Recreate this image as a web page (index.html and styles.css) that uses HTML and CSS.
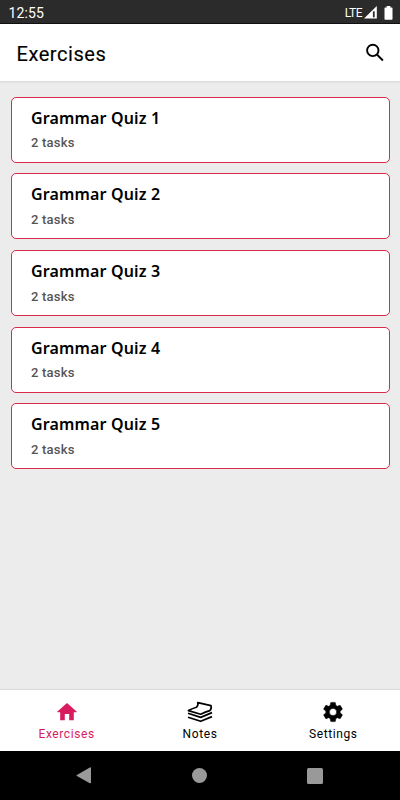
FILE: index.html
```html
<!DOCTYPE html>
<html lang="en">
<head>
<meta charset="utf-8">
<title>Exercises</title>
<link rel="stylesheet" href="styles.css">
</head>
<body>
<div class="status">
  <span class="clock">12:55</span>
  <span class="lte">LTE</span>
  <svg class="signal" width="13" height="13" viewBox="0 0 13 13"><path d="M0 12.6 12.8 0v12.6z" fill="#fff"/><path d="M9.8 5.3v6" stroke="#2b2b2b" stroke-width="1.8"/></svg>
  <svg class="battery" width="9" height="14" viewBox="0 0 9 14"><path d="M2.6 0h3.8v1.6h1.4q.7 0 .7.7v10.6q0 .8-.7.8H1.2q-.7 0-.7-.8V2.3q0-.7.7-.7h1.4z" fill="#fff"/></svg>
</div>
<header class="header">
  <h1>Exercises</h1>
  <svg width="18" height="19" viewBox="0 0 18 19" fill="none" stroke="#000" stroke-width="1.9"><circle cx="6.8" cy="7.4" r="5.7"/><path d="m10.9 11.5 6 6"/></svg>
</header>
<main class="list">
  <article class="card"><h2>Grammar Quiz 1</h2><p>2 tasks</p></article>
  <article class="card"><h2>Grammar Quiz 2</h2><p>2 tasks</p></article>
  <article class="card"><h2>Grammar Quiz 3</h2><p>2 tasks</p></article>
  <article class="card"><h2>Grammar Quiz 4</h2><p>2 tasks</p></article>
  <article class="card"><h2>Grammar Quiz 5</h2><p>2 tasks</p></article>
</main>
<nav class="tabs">
  <a class="tab active"><svg width="24" height="24" viewBox="0 0 24 24" fill="currentColor"><path d="M12 3 2.4 11.6v.6h2.8v8.1h4.6v-6.2h4.4v6.2h4.6v-8.1h2.8v-.6z"/></svg><span>Exercises</span></a>
  <a class="tab"><svg width="26" height="24" viewBox="0 0 26 24" fill="none" stroke="currentColor" stroke-width="1.7" stroke-linejoin="round"><path d="M10.8 2.7 24 5.6q.8 3.2-1.2 5-4.4 1.4-9.1 3.6L1.4 10.6q4.4-2.2 8-3.3 2-1.6 1.4-4.6z"/><path d="m1 13.3 12.7 4.1L25 12.6M1 17.2l12.7 4.1L25 16.6"/></svg><span>Notes</span></a>
  <a class="tab"><svg width="24" height="24" viewBox="0 0 24 24" fill="currentColor" stroke="currentColor" stroke-width=".5"><path d="M19.14 12.94c.04-.3.06-.61.06-.94s-.02-.64-.07-.94l2.03-1.58a.49.49 0 0 0 .12-.61l-1.92-3.32a.49.49 0 0 0-.59-.22l-2.39.96a7 7 0 0 0-1.62-.94l-.36-2.54a.48.48 0 0 0-.48-.41h-3.84a.47.47 0 0 0-.47.41l-.36 2.54c-.59.24-1.13.57-1.62.94l-2.39-.96a.48.48 0 0 0-.59.22L2.74 8.87a.47.47 0 0 0 .12.61l2.03 1.58a6 6 0 0 0 0 1.88l-2.03 1.58a.49.49 0 0 0-.12.61l1.92 3.32c.12.22.37.29.59.22l2.39-.96c.5.38 1.03.7 1.62.94l.36 2.54c.05.24.24.41.48.41h3.84c.24 0 .44-.17.47-.41l.36-2.54a6.6 6.6 0 0 0 1.62-.94l2.39.96c.22.08.47 0 .59-.22l1.92-3.32a.47.47 0 0 0-.12-.61zM12 15.6a3.6 3.6 0 1 1 0-7.2 3.6 3.6 0 0 1 0 7.2z"/></svg><span>Settings</span></a>
</nav>
<div class="system">
  <svg width="15" height="17" viewBox="0 0 15 17" fill="#999"><path d="M.5 8.2 13.8.4q1.2-.4 1.2.6v14.6q0 1-1.2.6L.5 8.8z"/></svg>
  <i class="home"></i>
  <i class="recent"></i>
</div>
</body>
</html>
```

FILE: styles.css
```css
* { box-sizing: border-box; }
body { margin: 0; width: 400px; height: 800px; overflow: hidden; display: flex; flex-direction: column; background: #ececec; font-family: Roboto, sans-serif; color: #000; }
h1, h2, p { margin: 0; }
svg { display: block; flex: none; }
.status { height: 24px; flex: none; display: flex; align-items: center; padding: 2px 8px 0 8.5px; background: #2b2b2b; border-bottom: 1px solid #111; color: #fff; }
.clock { font-size: 14px; letter-spacing: .1px; flex: 1; }
.lte { font-size: 12px; letter-spacing: -.5px; }
.signal { margin-left: 2px; }
.battery { margin: 0 -1px 0 7px; }
.header { height: 57px; flex: none; display: flex; align-items: center; justify-content: space-between; padding: 0 16px 0 16.5px; background: #fff; box-shadow: 0 1px 2px rgba(0,0,0,.1); }
.header h1 { font-size: 20px; font-weight: 400; line-height: 24px; letter-spacing: .55px; padding-top: 2px; -webkit-text-stroke: .15px #000; }
.list { flex: 1; padding: 15.8px 10.5px 0; display: flex; flex-direction: column; gap: 10.67px; }
.card { height: 66px; flex: none; border: 1px solid #d92b4c; border-radius: 5px; background: #fff; padding: 8.9px 20px 0 19.5px; }
.card h2 { font: 600 16px/22px "Noto Sans", sans-serif; letter-spacing: .15px; }
.card p { font-size: 13px; font-weight: 500; line-height: 16px; letter-spacing: .2px; color: #555; margin-top: 6.6px; }
.tabs { height: 61px; flex: none; display: flex; background: #fff; box-shadow: 0 -1px 1px rgba(0,0,0,.06); }
.tab { flex: 1; display: flex; flex-direction: column; align-items: center; padding-top: 10px; }
.tab span { font-size: 12px; line-height: 14px; letter-spacing: .6px; margin-top: 3px; }
.active { color: #d91b60; }
.system { height: 49px; flex: none; display: flex; align-items: center; justify-content: space-between; padding: 0 77px 0 76px; background: #000; }
.home { width: 15px; height: 15px; border-radius: 50%; background: #999; }
.recent { width: 16px; height: 16px; border-radius: 1.5px; background: #999; }
```
